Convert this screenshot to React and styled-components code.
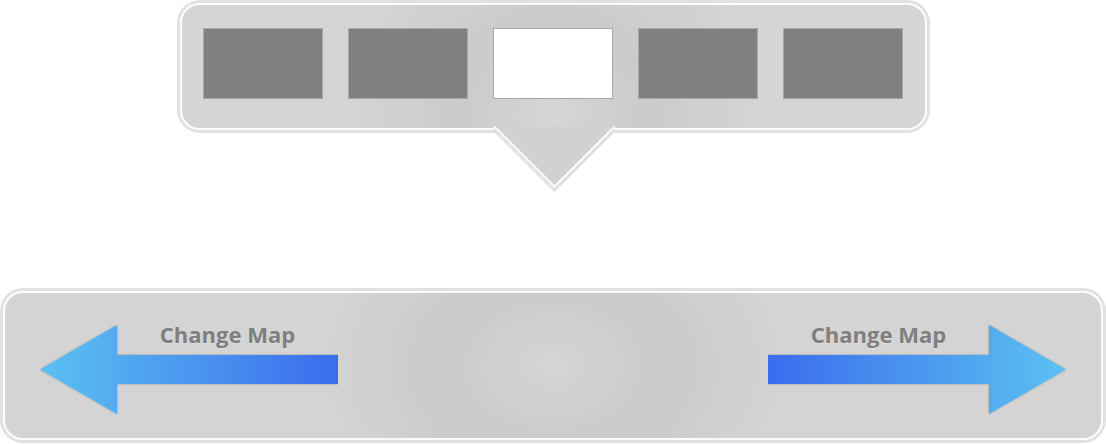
import React from 'react';
import styled, { createGlobalStyle } from 'styled-components';

const GlobalStyle = createGlobalStyle`
  html, body {
    margin: 0;
    padding: 0;
    background: #fff;
  }
  * { box-sizing: border-box; }
`;

const Page = styled.div`
  width: 1106px;
  height: 444px;
  display: flex;
  flex-direction: column;
  align-items: center;
  overflow: hidden;
  font-family: 'Open Sans', 'Liberation Sans', sans-serif;
`;

const Panel = styled.div`
  position: relative;
  border: 2px solid #fbfbfb;
  border-radius: 20px;
  box-shadow: 0 0 0 3px #e1e1e1;
`;

const ThumbPanel = styled(Panel)`
  margin-top: 3px;
  width: 747px;
  height: 127px;
  padding: 23px 0 0;
  display: flex;
  justify-content: center;
  gap: 25px;
  background: radial-gradient(circle at 50% 90%, #d6d6d6 0, #cbcbcb 95px, #d5d5d5 210px);

  &::after {
    content: '';
    position: absolute;
    left: 50%;
    bottom: -42px;
    width: 85px;
    height: 85px;
    margin-left: -42.5px;
    transform: rotate(45deg);
    background: #d1d1d1;
    border-right: 2px solid #fbfbfb;
    border-bottom: 2px solid #fbfbfb;
    box-shadow: 3px 3px 0 0 #e1e1e1, 0 0 0 0 #e1e1e1;
    clip-path: polygon(calc(100% + 8px) -8px, calc(100% + 8px) calc(100% + 8px), -8px calc(100% + 8px));
  }
`;

const Thumb = styled.div`
  width: 120px;
  height: 71px;
  border: 1px solid #a8a8a8;
  background: ${(p) => (p.active ? '#ffffff' : '#808080')};
`;

const MapBar = styled(Panel)`
  margin-top: 161px;
  width: 1100px;
  padding: 32px 34px 24px;
  display: flex;
  justify-content: space-between;
  align-items: center;
  background: radial-gradient(ellipse 230px 170px at 50% 50%, #d5d5d5 0%, #cacaca 50%, #d4d4d4 100%);
`;

const ArrowButton = styled.div`
  position: relative;
  width: 299px;
  height: 89px;
  cursor: pointer;

  svg {
    display: block;
    transform: ${(p) => (p.right ? 'scaleX(-1)' : 'none')};
  }
`;

const Label = styled.span`
  position: absolute;
  top: -2px;
  left: ${(p) => (p.right ? '0' : '78px')};
  width: 221px;
  text-align: center;
  font-size: 22px;
  line-height: 22px;
  font-weight: 700;
  color: #7f7f7f;
  text-shadow: 0 1px 0 rgba(255, 255, 255, 0.25);
  white-space: nowrap;
`;

const Arrow = ({ id }) => (
  <svg width="299" height="89" viewBox="0 0 299 89">
    <defs>
      <linearGradient id={id} x1="0" y1="0" x2="1" y2="0">
        <stop offset="0" stopColor="#5cc0f2" />
        <stop offset="0.3" stopColor="#51a8ef" />
        <stop offset="1" stopColor="#3b6cee" />
      </linearGradient>
      <filter id={id + '-s'} x="-5%" y="-10%" width="110%" height="120%">
        <feDropShadow dx="0" dy="0" stdDeviation="1.2" floodColor="#000" floodOpacity="0.3" />
      </filter>
    </defs>
    <polygon
      points="1,44.5 78,0 78,30 299,30 299,59 78,59 78,89"
      fill={`url(#${id})`}
      filter={`url(#${id}-s)`}
    />
  </svg>
);

const MapArrow = ({ right }) => (
  <ArrowButton right={right}>
    <Arrow id={right ? 'arrow-r' : 'arrow-l'} />
    <Label right={right}>Change Map</Label>
  </ArrowButton>
);

export default function App() {
  const thumbs = [0, 1, 2, 3, 4];
  return (
    <>
      <GlobalStyle />
      <Page>
        <ThumbPanel>
          {thumbs.map((i) => (
            <Thumb key={i} active={i === 2} />
          ))}
        </ThumbPanel>
        <MapBar>
          <MapArrow />
          <MapArrow right />
        </MapBar>
      </Page>
    </>
  );
}
